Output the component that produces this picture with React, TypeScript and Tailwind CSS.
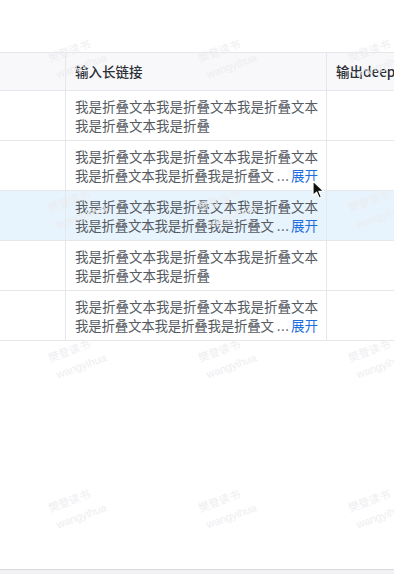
import type { ReactNode } from 'react';

const FULL = '我是折叠文本我是折叠文本我是折叠文本';

type Row = {
  id: number;
  second: string;
  collapsed: boolean;
  active?: boolean;
};

const rows: Row[] = [
  { id: 1, second: '我是折叠文本我是折叠', collapsed: false },
  { id: 2, second: '我是折叠文本我是折叠我是折叠文', collapsed: true },
  { id: 3, second: '我是折叠文本我是折叠我是折叠文', collapsed: true, active: true },
  { id: 4, second: '我是折叠文本我是折叠', collapsed: false },
  { id: 5, second: '我是折叠文本我是折叠我是折叠文', collapsed: true },
];

function Cell({ children, className = '' }: { children?: ReactNode; className?: string }) {
  return <div className={`border-b border-[#e6e7ea] ${className}`}>{children}</div>;
}

// faint repeated watermark laid over the page
function Watermarks() {
  const tiles = [];
  for (let r = 0; r < 4; r++) {
    for (let c = 0; c < 3; c++) {
      tiles.push(
        <div
          key={`${r}-${c}`}
          className="absolute flex -rotate-[20deg] flex-col items-start gap-[6px] text-[11px] leading-[13px] text-[#ededf0]"
          style={{ left: 48 + c * 150, top: 42 + r * 150 }}
        >
          <span className="pl-[2px]">樊登读书</span>
          <span className="pl-[4px] font-['Liberation_Sans',sans-serif]">wangyihua</span>
        </div>,
      );
    }
  }
  return <div className="pointer-events-none absolute inset-0 opacity-90">{tiles}</div>;
}

function Cursor() {
  return (
    <svg className="pointer-events-none absolute left-[312px] top-[180px]" width="14" height="20" viewBox="0 0 14 20">
      <path d="M1 1 L1 15.5 L4.6 12.2 L7.2 18 L9.4 17 L6.9 11.3 L11.8 11.3 Z" fill="#111" stroke="#fff" strokeWidth="1.2" strokeLinejoin="round" />
    </svg>
  );
}

export default function App() {
  return (
    <div className="relative flex h-[574px] w-[394px] flex-col overflow-hidden bg-white font-['Noto_Sans_CJK_SC','Noto_Sans',sans-serif]">
      <div className="h-[52px] shrink-0" />
      <div className="grid shrink-0 grid-cols-[66px_261px_1fr] border-t border-[#e6e7ea] text-[13.5px] leading-[18.5px]">
        <Cell className="h-[38px] border-r bg-[#f8f8fa]" />
        <Cell className="flex h-[38px] items-center border-r bg-[#f8f8fa] px-[9px] font-medium text-[#2b2f36]">
          输入长链接
        </Cell>
        <Cell className="flex h-[38px] items-center overflow-hidden whitespace-nowrap bg-[#f8f8fa] px-[9px] font-medium text-[#2b2f36]">
          输出deep
        </Cell>
        {rows.map((row) => {
          const bg = row.active ? 'bg-[#e7f3fd]' : 'bg-white';
          return (
            <div key={row.id} className="contents">
              <Cell className={`h-[50px] border-r ${bg}`} />
              <Cell className={`flex h-[50px] flex-col justify-center border-r pl-[9px] pr-[8px] text-[#565b62] ${bg}`}>
                <div className="whitespace-nowrap">{FULL}</div>
                {row.collapsed ? (
                  <div className="flex items-center whitespace-nowrap">
                    <span className="tracking-[-0.25px]">{row.second}</span>
                    <span className="ml-[3px] tracking-[0.5px]">...</span>
                    <span className="ml-auto text-[#1d6fe0]">展开</span>
                  </div>
                ) : (
                  <div className="whitespace-nowrap">{row.second}</div>
                )}
              </Cell>
              <Cell className={`h-[50px] ${bg}`} />
            </div>
          );
        })}
      </div>
      <div className="flex-1" />
      <div className="h-[5px] shrink-0 border-t border-[#d9d9de] bg-[#f1f1f4]" />
      <Watermarks />
      <Cursor />
    </div>
  );
}
